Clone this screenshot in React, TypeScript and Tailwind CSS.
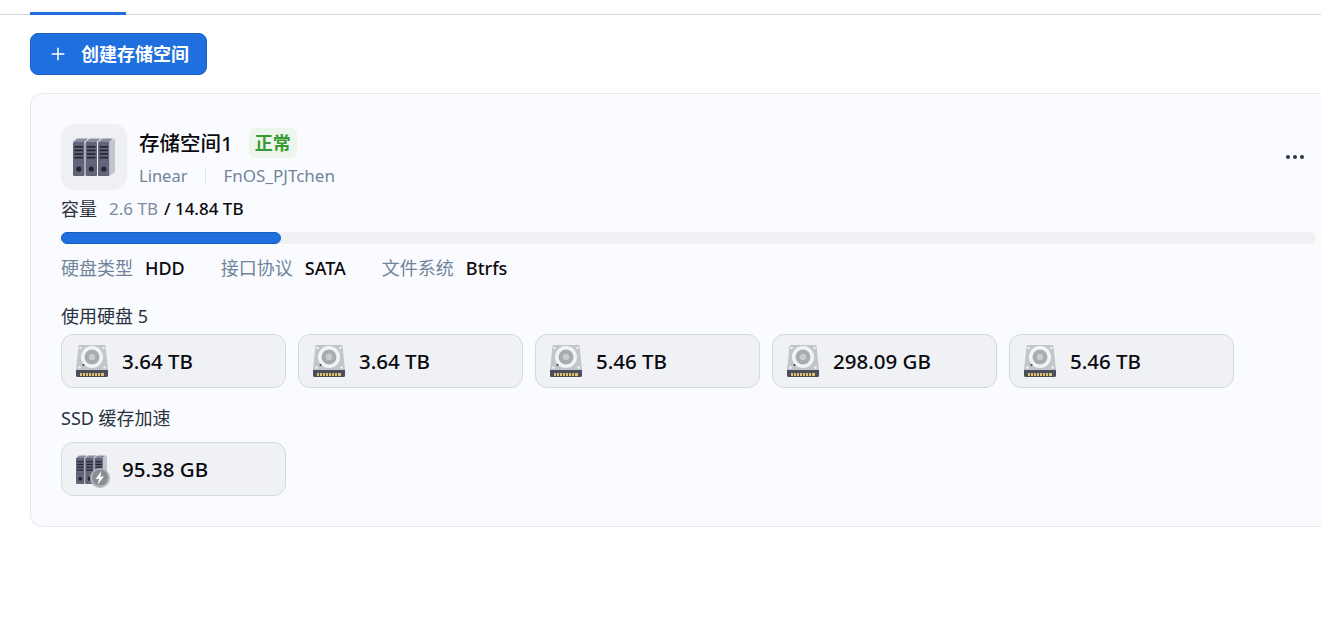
import { Plus } from 'lucide-react'

const font = "font-['Noto_Sans','Noto_Sans_CJK_SC',sans-serif]"

function BinderIcon({ width = 48, height = 48, box = '0 0 48 48' }: { width?: number; height?: number; box?: string }) {
  const xs = [0, 12.5, 25]
  return (
    <svg width={width} height={height} viewBox={box} preserveAspectRatio="none">
      {xs.map((x) => (
        <g key={x} transform={`translate(${x} 0)`}>
          <path d="M3 9 L7 5.5 L18 5.5 L14.5 9 Z" fill="#8b8e9c" />
          <rect x="3" y="9" width="11.5" height="34" rx="1" fill="#62657a" />
          <rect x="4.5" y="13" width="8.5" height="1.6" fill="#23252f" />
          <rect x="4.5" y="16.6" width="8.5" height="1.6" fill="#23252f" />
          <rect x="4.5" y="20.2" width="8.5" height="1.6" fill="#23252f" />
          <rect x="4.5" y="23.8" width="8.5" height="1.6" fill="#23252f" />
          <circle cx="8.8" cy="36" r="2.6" fill="#23252f" />
        </g>
      ))}
      <path d="M39.5 9 L45 5.5 V39 L39.5 43 Z" fill="#c3c5cd" />
    </svg>
  )
}

function DiskIcon() {
  return (
    <svg width="32" height="32" viewBox="0 0 32 32">
      <path d="M2.5 1 Q2.6 0 3.6 0 H28.4 Q29.4 0 29.5 1 L32 25 H0 Z" fill="#c3c5cc" />
      <path d="M0 25 H32 V30.5 Q32 32 30.5 32 H1.5 Q0 32 0 30.5 Z" fill="#4a4d5c" />
      <rect x="4" y="28" width="24" height="3" fill="#e3c36a" />
      <g fill="#4a4d5c">
        <rect x="6" y="28" width="1" height="3" />
        <rect x="9" y="28" width="1" height="3" />
        <rect x="12" y="28" width="1" height="3" />
        <rect x="15" y="28" width="1" height="3" />
        <rect x="18" y="28" width="1" height="3" />
        <rect x="21" y="28" width="1" height="3" />
        <rect x="24" y="28" width="1" height="3" />
      </g>
      <circle cx="16" cy="12" r="11" fill="#f2f3f5" />
      <circle cx="16" cy="12" r="7.5" fill="#a9abb3" />
      <circle cx="16" cy="12" r="3.2" fill="#c9cbd1" />
      <circle cx="4.5" cy="3" r="1.3" fill="#eef0f2" />
      <circle cx="27.5" cy="3" r="1.3" fill="#eef0f2" />
      <circle cx="3.5" cy="22.5" r="1.3" fill="#eef0f2" />
      <circle cx="28.5" cy="22.5" r="1.3" fill="#eef0f2" />
      <circle cx="7.5" cy="20" r="1" fill="#3a3c48" />
    </svg>
  )
}

function CacheIcon() {
  return (
    <div className="relative flex h-8 w-8 shrink-0 items-center">
      <BinderIcon width={31} height={29} box="3 5 42 38" />
      <svg className="absolute left-[14px] top-[15px]" width="20" height="20" viewBox="0 0 20 20">
        <circle cx="10" cy="10" r="10" fill="#b4b6bd" />
        <circle cx="10" cy="9.5" r="8" fill="#8a8c94" />
        <path d="M11.5 3 L5.5 11 H9 L7.5 17 L14 8.5 H10.5 Z" fill="#f4f5f6" />
      </svg>
    </div>
  )
}

function DiskChip({ label, cache }: { label: string; cache?: boolean }) {
  return (
    <div className="flex h-[54px] w-[225px] shrink-0 items-center rounded-[12px] border border-[#d3d8e0] bg-[#f0f1f5] pl-[14px]">
      {cache ? <CacheIcon /> : <DiskIcon />}
      <span className="ml-[14px] text-[20.5px] leading-none font-medium text-[#0a0a0f]">{label}</span>
    </div>
  )
}

function Spec({ name, value }: { name: string; value: string }) {
  return (
    <div className="flex items-center gap-3">
      <span className="text-[#71849a]">{name}</span>
      <span className="font-medium text-[#0a0a0f]">{value}</span>
    </div>
  )
}

export default function App() {
  const disks = ['3.64 TB', '3.64 TB', '5.46 TB', '298.09 GB', '5.46 TB']
  return (
    <div className={`${font} h-[634px] w-[1321px] overflow-hidden bg-white`}>
      <div className="h-[15px] border-b border-[#d3d8e0] pl-[30px]">
        <div className="h-[15px] w-[96px] border-b-[3px] border-[#1f6fde]" />
      </div>

      <div className="pl-[30px] pt-[18px]">
        <button className="flex h-[42px] w-[177px] items-center rounded-[8px] border border-[#1a5fc2] bg-[#1f6fde] pl-[17px] text-[18px] font-bold text-white">
          <Plus size={20} strokeWidth={1.8} />
          <span className="ml-[13px]">创建存储空间</span>
        </button>

        <div className="relative mt-[18px] h-[434px] w-[1316px] rounded-[12px] border border-[#e6e8ee] bg-[#fafbfe] px-[30px] pt-[30px] text-[18px]">
          <div className="flex">
            <div className="flex h-[66px] w-[66px] items-center justify-center rounded-[14px] bg-[#eff0f4]">
              <BinderIcon />
            </div>
            <div className="ml-[12px]">
              <div className="flex h-[38px] items-center">
                <span className="text-[20.5px] font-medium text-[#0a0a0f]">存储空间1</span>
                <span className="ml-[16px] flex h-[30px] w-[48px] items-center justify-center rounded-[6px] bg-[#edf6ed] text-[18px] font-bold text-[#3b9a34]">
                  正常
                </span>
              </div>
              <div className="flex h-[28px] items-center text-[16.5px] text-[#71849a]">
                <span>Linear</span>
                <span className="ml-[18px] mr-[17px] h-[18px] w-px bg-[#e1e4ea]" />
                <span className="text-[17px]">FnOS_PJTchen</span>
              </div>
            </div>
          </div>

          {/* 右上角菜单 */}
          <div className="absolute left-[1255px] top-[61px] flex gap-[3px]">
            <span className="h-1 w-1 rounded-full bg-[#2a3648]" />
            <span className="h-1 w-1 rounded-full bg-[#2a3648]" />
            <span className="h-1 w-1 rounded-full bg-[#2a3648]" />
          </div>

          <div className="mt-[7px] flex h-[24px] items-center">
            <span className="text-[#2a3240]">容量</span>
            <span className="ml-3 text-[17px] text-[#7c8da3]">2.6 TB</span>
            <span className="ml-[6px] text-[17px] font-medium text-[#0a0a0f]">/ 14.84 TB</span>
          </div>

          <div className="mt-[11px] h-3 w-[1255px] rounded-full bg-[#f0f1f5]">
            <div className="h-3 w-[220px] rounded-full border border-[#1a5fc2] bg-[#1f6fde]" />
          </div>

          <div className="mt-[12px] flex h-[24px] items-center gap-9">
            <Spec name="硬盘类型" value="HDD" />
            <Spec name="接口协议" value="SATA" />
            <Spec name="文件系统" value="Btrfs" />
          </div>

          <div className="mt-[24px] h-[24px] leading-[24px] text-[#2a3240]">使用硬盘 5</div>
          <div className="mt-[6px] flex gap-3">
            {disks.map((d, i) => (
              <DiskChip key={i} label={d} />
            ))}
          </div>

          <div className="mt-[18px] h-[24px] leading-[24px] text-[#2a3240]">SSD 缓存加速</div>
          <div className="mt-[12px] flex">
            <DiskChip label="95.38 GB" cache />
          </div>
        </div>
      </div>
    </div>
  )
}
